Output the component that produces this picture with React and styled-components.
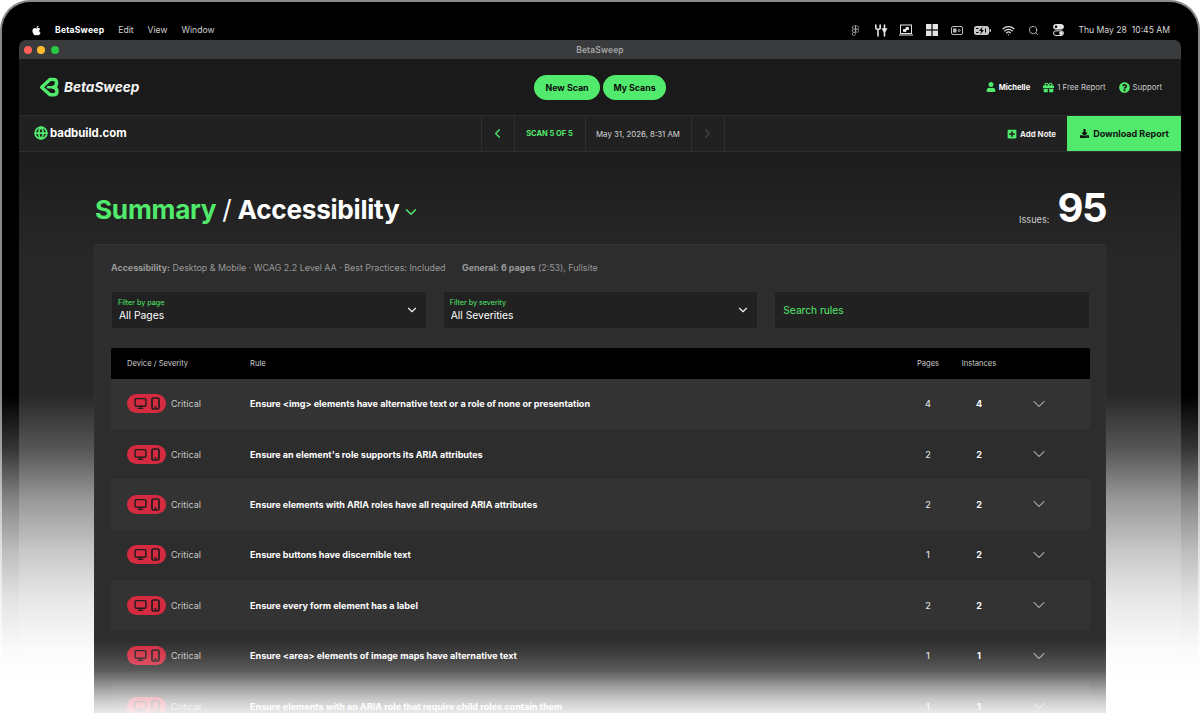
import React from 'react'
import styled, { createGlobalStyle } from 'styled-components'
import { FaApple, FaUser, FaGift, FaQuestionCircle, FaPlusSquare, FaDownload } from 'react-icons/fa'
import { ChevronDown, ChevronLeft, ChevronRight, Monitor, Globe, Wifi, Search, Figma } from 'lucide-react'

const GREEN = '#52ea6c'
const FONT = `Inter, "Noto Sans", sans-serif`

const GlobalStyle = createGlobalStyle`
    html, body {
        margin:0;
        padding:0;
        background:#fff;
        font-family:${FONT};
    }
`

const Page = styled.div`
    position:relative;
    width:1200px;
    height:713px;
    overflow:hidden;
    background:#fff;
`

const Laptop = styled.div`
    height:760px;
    box-sizing:border-box;
    background:#000;
    border:2px solid #8a8a8a;
    border-bottom:none;
    border-radius:30px 30px 0 0;
    padding:0 17px;
`

const MenuBar = styled.div`
    height:38px;
    display:flex;
    align-items:center;
    justify-content:space-between;
    padding:18px 11px 0 12px;
    box-sizing:border-box;
    color:#d8d8d8;
    font-size:8.6px;
`

const MenuGroup = styled.div`
    display:flex;
    align-items:center;
`

const MenuItem = styled.span`
    margin-left:${p => p.$gap}px;
    font-weight:${p => (p.$bold ? 700 : 400)};
    letter-spacing:${p => (p.$bold ? '.2px' : '0')};
    color:${p => (p.$bold ? '#fff' : '#d0d0d0')};
`

const StatusIcon = styled.span`
    width:25.4px;
    height:14px;
    display:flex;
    align-items:center;
    justify-content:center;
    color:#e4e4e4;
`

const Clock = styled.span`
    margin-left:7px;
    white-space:pre;
`

const Window = styled.div`
    border-radius:7px 7px 0 0;
    overflow:hidden;
    background:#1a1a1a;
    height:722px;
`

const TitleBar = styled.div`
    position:relative;
    height:19px;
    background:#393b3c;
    display:flex;
    align-items:center;
    justify-content:center;
    color:#a8a8a8;
    font-size:8.4px;
    font-weight:600;
    letter-spacing:.2px;
`

const Lights = styled.div`
    position:absolute;
    left:5px;
    top:6px;
    display:flex;
    gap:5.4px;
`

const Light = styled.span`
    width:8px;
    height:8px;
    border-radius:50%;
    background:${p => p.$color};
`

const Header = styled.div`
    height:56px;
    display:grid;
    grid-template-columns:1fr auto 1fr;
    align-items:center;
    padding:0 19px;
    background:#1a1a1a;
    border-bottom:1px solid #2c2c2c;
`

const Logo = styled.div`
    display:flex;
    align-items:center;
    gap:5px;
    margin-left:1px;
    color:#f4f4f4;
    font-size:13.6px;
    font-weight:700;
    font-style:italic;
`

const Buttons = styled.div`
    display:flex;
    gap:3px;
`

const PillButton = styled.button`
    height:25px;
    width:${p => p.$width}px;
    padding:0;
    border:none;
    border-radius:13px;
    background:${GREEN};
    color:#0b0b0b;
    font-family:${FONT};
    font-size:8.8px;
    font-weight:700;
`

const UserLinks = styled.div`
    display:flex;
    justify-content:flex-end;
    gap:13px;
`

const UserLink = styled.span`
    display:flex;
    align-items:center;
    gap:3px;
    color:${p => (p.$bold ? '#fff' : '#c8c8c8')};
    font-size:${p => (p.$bold ? 7.6 : 7.8)}px;
    font-weight:${p => (p.$bold ? 700 : 400)};
    svg { color:${GREEN}; }
`

const SubBar = styled.div`
    height:35px;
    display:grid;
    grid-template-columns:1fr auto 1fr;
    align-items:stretch;
    background:#212121;
    border-bottom:1px solid #2f2f2f;
`

const Domain = styled.div`
    display:flex;
    align-items:center;
    gap:2px;
    padding:0 0 2px 15px;
    color:#fff;
    font-size:11.4px;
    font-weight:700;
    svg { color:${GREEN}; }
`

const ScanNav = styled.div`
    display:flex;
    margin-left:5px;
    border-left:1px solid #2f2f2f;
`

const ScanCell = styled.div`
    width:${p => p.$width}px;
    display:flex;
    align-items:center;
    justify-content:center;
    border-right:1px solid #2f2f2f;
    color:${p => (p.$green ? GREEN : '#d8d8d8')};
    font-size:${p => (p.$green ? 7.5 : 7.85)}px;
    font-weight:${p => (p.$green ? 700 : 400)};
`

const SubActions = styled.div`
    display:flex;
    justify-content:flex-end;
    align-items:stretch;
`

const NoteButton = styled.span`
    display:flex;
    align-items:center;
    gap:3px;
    margin-right:11px;
    color:#eee;
    font-size:7.9px;
    font-weight:700;
    svg { color:${GREEN}; }
`

const DownloadButton = styled.div`
    width:113px;
    padding-left:1px;
    display:flex;
    align-items:center;
    justify-content:center;
    gap:4px;
    background:${GREEN};
    color:#111;
    font-size:9px;
    font-weight:700;
`

const Content = styled.div`
    padding:31px 75px 0;
    background:linear-gradient(#1c1c1c, #282828 110px, #2a2a2a);
    height:560px;
`

const TitleRow = styled.div`
    height:61px;
    display:flex;
    justify-content:space-between;
    align-items:flex-start;
`

const Title = styled.h1`
    margin:0;
    display:flex;
    align-items:center;
    height:52px;
    color:#fff;
    font-size:26.2px;
    font-weight:700;
    letter-spacing:-.28px;
`

const TitleGreen = styled.span`
    color:${GREEN};
    margin-left:1px;
`

const TitleSlash = styled.span`
    font-weight:400;
    margin:0 6px;
`

const TitleChevron = styled(ChevronDown)`
    margin:6px 0 0 3px;
    color:${GREEN};
`

const IssueCount = styled.div`
    display:flex;
    align-items:flex-start;
    gap:8px;
    color:#ccc;
    font-size:9.2px;
    b {
        color:#fff;
        font-size:40px;
        line-height:50px;
        font-weight:700;
        letter-spacing:-1.5px;
    }
`

const IssueLabel = styled.span`
    margin-top:31px;
    line-height:12px;
`

const Panel = styled.div`
    background:#2d2d2d;
    border:1px solid #333;
    border-radius:3px;
    padding:16px 15px 16px 16px;
`

const Meta = styled.div`
    display:flex;
    gap:16.5px;
    color:#999;
    font-size:8.9px;
    line-height:14px;
    b { font-weight:700; }
`

const Filters = styled.div`
    display:grid;
    grid-template-columns:repeat(3, 1fr);
    gap:16px;
    margin:16px 0 19px;
`

const Field = styled.div`
    height:38px;
    box-sizing:border-box;
    display:flex;
    align-items:center;
    justify-content:space-between;
    padding:0 7px 0 ${p => (p.$search ? 8 : 6)}px;
    background:#212121;
    border:1px solid #2f2f2f;
    border-radius:2px;
    color:${p => (p.$search ? GREEN : '#fff')};
    font-size:10.2px;
    svg { color:#eee; }
`

const FieldLabel = styled.div`
    color:${GREEN};
    font-size:7.2px;
    line-height:10px;
`

const FieldValue = styled.div`
    color:#fff;
    font-size:10.3px;
    line-height:15px;
    margin-left:1px;
`

const Table = styled.div`
    border-radius:2px;
    overflow:hidden;
`

const TableRow = styled.div`
    display:grid;
    grid-template-columns:139px 653px 50px 52px 68px 17px;
    align-items:center;
    height:${p => (p.$head ? 30.5 : 50.4)}px;
    background:${p => (p.$head ? '#000' : p.$odd ? '#333' : 'transparent')};
    color:${p => (p.$head ? '#ccc' : '#fff')};
    font-size:${p => (p.$head ? 7.6 : 9.05)}px;
    font-weight:${p => (p.$head ? 400 : 700)};
`

const DeviceCell = styled.div`
    display:flex;
    align-items:center;
    gap:5px;
    padding-left:16px;
`

const SeverityPill = styled.span`
    width:39px;
    height:19px;
    display:flex;
    align-items:center;
    justify-content:center;
    gap:4px;
    border-radius:10px;
    background:#d42b40;
    color:#1d1d1d;
`

const SeverityText = styled.span`
    color:#c8c8c8;
    font-size:9px;
    font-weight:400;
`

const Count = styled.div`
    text-align:center;
    color:${p => (p.$dim ? '#ddd' : 'inherit')};
    font-weight:${p => (p.$dim ? 500 : 700)};
`

const HeadCount = styled.div`
    text-align:center;
`

const RowChevron = styled.div`
    display:flex;
    justify-content:center;
    color:#9a9a9a;
`

const SideFade = styled.div`
    position:absolute;
    top:395px;
    bottom:0;
    width:94px;
    ${p => (p.$right ? 'right:0;' : 'left:0;')}
    background:linear-gradient(rgba(255,255,255,0), rgba(255,255,255,.21) 17%, rgba(255,255,255,.52) 33%, rgba(255,255,255,.74) 49%, rgba(255,255,255,.89) 64%, rgba(255,255,255,.98) 80%, #fff 90%);
`

const BottomFade = styled.div`
    position:absolute;
    left:94px;
    right:94px;
    bottom:0;
    height:73px;
    background:linear-gradient(rgba(255,255,255,0), rgba(255,255,255,.1) 22%, rgba(255,255,255,.21) 41%, rgba(255,255,255,.4) 55%, rgba(255,255,255,.57) 68%, rgba(255,255,255,.74) 82%, rgba(255,255,255,.9));
`

const rows = [
    ['Ensure <img> elements have alternative text or a role of none or presentation', 4, 4],
    ["Ensure an element's role supports its ARIA attributes", 2, 2],
    ['Ensure elements with ARIA roles have all required ARIA attributes', 2, 2],
    ['Ensure buttons have discernible text', 1, 2],
    ['Ensure every form element has a label', 2, 2],
    ['Ensure <area> elements of image maps have alternative text', 1, 1],
    ['Ensure elements with an ARIA role that require child roles contain them', 1, 1],
]

function LogoMark() {
    return (
        <svg width="20" height="20" viewBox="0 0 20 20" fill="none" stroke={GREEN} strokeWidth="3.4" strokeLinejoin="round" strokeLinecap="round">
            <path d="M11 2.4 L2.6 10.2 L11 17.8 H14.6 Q18 17.8 18 14.4 Q18 10.6 14.2 10.2 Q17.6 9.8 17.6 6 Q17.6 2.4 14.4 2.4 Z" />
            <path d="M9 10.2 H13" strokeWidth="2.4" />
        </svg>
    )
}

function PhoneIcon() {
    return (
        <svg width="9" height="13" viewBox="0 0 9 13" fill="none" stroke="currentColor" strokeWidth="1.7">
            <rect x="1" y="1" width="7" height="11" rx="1.6" />
            <path d="M3.5 10 H5.5" />
        </svg>
    )
}

function ToolsIcon() {
    return (
        <svg width="14" height="13" viewBox="0 0 14 13" fill="none" stroke="currentColor" strokeWidth="1.6" strokeLinecap="round">
            <path d="M4 5.5 V12 M1.8 1 V3.6 Q1.8 5.5 4 5.5 Q6.2 5.5 6.2 3.6 V1" />
            <path d="M10.5 1 V12" />
            <path d="M8.8 5 L10.5 8 L12.2 5 Z" fill="currentColor" />
        </svg>
    )
}

function ScreenIcon() {
    return (
        <svg width="14" height="12" viewBox="0 0 14 12" fill="none" stroke="currentColor" strokeWidth="1">
            <rect x="1.5" y="1" width="11" height="8.5" />
            <path d="M0 11 H14" />
            <path d="M4.5 7.5 H7 V5.5 H9.5 V3.5 H7 V5.5 H4.5 Z" fill="currentColor" />
        </svg>
    )
}

function GridIcon() {
    return (
        <svg width="12" height="12" viewBox="0 0 12 12" fill="currentColor">
            <rect width="5.4" height="5.4" />
            <rect x="6.6" width="5.4" height="5.4" />
            <rect y="6.6" width="5.4" height="5.4" />
            <rect x="6.6" y="6.6" width="5.4" height="5.4" />
        </svg>
    )
}

function CardIcon() {
    return (
        <svg width="12" height="9" viewBox="0 0 12 9" fill="none" stroke="#b8b8b8" strokeWidth="1">
            <rect x=".5" y=".5" width="11" height="8" rx="1.5" />
            <rect x="2.5" y="3" width="2.5" height="3" fill="#b8b8b8" />
            <circle cx="8.2" cy="4.5" r="1" />
        </svg>
    )
}

function BatteryIcon() {
    return (
        <svg width="17" height="9" viewBox="0 0 17 9">
            <rect width="15" height="9" rx="2.5" fill="#c8c8c8" />
            <rect x="15.5" y="3" width="1.5" height="3" rx=".7" fill="#c8c8c8" />
            <path d="M8.5 .8 L5 5 H7.2 L6.4 8.2 L10 4 H7.8 Z" fill="#000" />
            <path d="M2 2.5 H4.5 M2 6.5 H4.5 M11.5 2.5 V6.5" stroke="#000" strokeWidth="1" />
        </svg>
    )
}

function ControlIcon() {
    return (
        <svg width="11" height="12" viewBox="0 0 11 12" fill="none" stroke="currentColor" strokeWidth="1">
            <rect x=".5" y=".5" width="10" height="4.6" rx="2.3" fill="currentColor" />
            <circle cx="3" cy="2.8" r="1.3" fill="#000" stroke="none" />
            <rect x=".5" y="6.9" width="10" height="4.6" rx="2.3" />
            <circle cx="8" cy="9.2" r="1.4" fill="currentColor" />
        </svg>
    )
}

function App() {
    return (
        <Page>
            <GlobalStyle />
            <Laptop>
                <MenuBar>
                    <MenuGroup>
                        <FaApple size={11} color="#fff" />
                        <MenuItem $gap={13} $bold>BetaSweep</MenuItem>
                        <MenuItem $gap={14}>Edit</MenuItem>
                        <MenuItem $gap={14}>View</MenuItem>
                        <MenuItem $gap={14}>Window</MenuItem>
                    </MenuGroup>
                    <MenuGroup>
                        <StatusIcon><Figma size={11} strokeWidth={1.3} color="#bbb" /></StatusIcon>
                        <StatusIcon><ToolsIcon /></StatusIcon>
                        <StatusIcon><ScreenIcon /></StatusIcon>
                        <StatusIcon><GridIcon /></StatusIcon>
                        <StatusIcon><CardIcon /></StatusIcon>
                        <StatusIcon><BatteryIcon /></StatusIcon>
                        <StatusIcon><Wifi size={13} strokeWidth={2.2} /></StatusIcon>
                        <StatusIcon><Search size={11} strokeWidth={1.6} /></StatusIcon>
                        <StatusIcon><ControlIcon /></StatusIcon>
                        <Clock>Thu May 28  10:45 AM</Clock>
                    </MenuGroup>
                </MenuBar>
                <Window>
                    <TitleBar>
                        <Lights>
                            <Light $color="#ff5f57" />
                            <Light $color="#febc2e" />
                            <Light $color="#28c840" />
                        </Lights>
                        BetaSweep
                    </TitleBar>
                    <Header>
                        <Logo><LogoMark />BetaSweep</Logo>
                        <Buttons>
                            <PillButton $width={66}>New Scan</PillButton>
                            <PillButton $width={63}>My Scans</PillButton>
                        </Buttons>
                        <UserLinks>
                            <UserLink $bold><FaUser size={10} />Michelle</UserLink>
                            <UserLink><FaGift size={11} />1 Free Report</UserLink>
                            <UserLink><FaQuestionCircle size={11} />Support</UserLink>
                        </UserLinks>
                    </Header>
                    <SubBar>
                        <Domain><Globe size={14} strokeWidth={3} />badbuild.com</Domain>
                        <ScanNav>
                            <ScanCell $width={32} $green><ChevronLeft size={15} /></ScanCell>
                            <ScanCell $width={70} $green>SCAN 5 OF 5</ScanCell>
                            <ScanCell $width={105}>May 31, 2026, 8:31 AM</ScanCell>
                            <ScanCell $width={32}><ChevronRight size={15} color="#444" /></ScanCell>
                        </ScanNav>
                        <SubActions>
                            <NoteButton><FaPlusSquare size={10} />Add Note</NoteButton>
                            <DownloadButton><FaDownload size={9} />Download Report</DownloadButton>
                        </SubActions>
                    </SubBar>
                    <Content>
                        <TitleRow>
                            <Title>
                                <TitleGreen>Summary</TitleGreen>
                                <TitleSlash>/</TitleSlash>
                                Accessibility
                                <TitleChevron size={18} />
                            </Title>
                            <IssueCount><IssueLabel>Issues:</IssueLabel><b>95</b></IssueCount>
                        </TitleRow>
                        <Panel>
                            <Meta>
                                <span><b>Accessibility:</b> Desktop &amp; Mobile · WCAG 2.2 Level AA · Best Practices: Included</span>
                                <span><b>General: 6 pages</b> (2:53), Fullsite</span>
                            </Meta>
                            <Filters>
                                <Field>
                                    <div>
                                        <FieldLabel>Filter by page</FieldLabel>
                                        <FieldValue>All Pages</FieldValue>
                                    </div>
                                    <ChevronDown size={14} />
                                </Field>
                                <Field>
                                    <div>
                                        <FieldLabel>Filter by severity</FieldLabel>
                                        <FieldValue>All Severities</FieldValue>
                                    </div>
                                    <ChevronDown size={14} />
                                </Field>
                                <Field $search>Search rules</Field>
                            </Filters>
                            <Table>
                                <TableRow $head>
                                    <DeviceCell>Device / Severity</DeviceCell>
                                    <div>Rule</div>
                                    <HeadCount>Pages</HeadCount>
                                    <HeadCount>Instances</HeadCount>
                                </TableRow>
                                {rows.map((row, i) => (
                                    <TableRow key={row[0]} $odd={i % 2 === 0}>
                                        <DeviceCell>
                                            <SeverityPill>
                                                <Monitor size={13} strokeWidth={2.6} />
                                                <PhoneIcon />
                                            </SeverityPill>
                                            <SeverityText>Critical</SeverityText>
                                        </DeviceCell>
                                        <div>{row[0]}</div>
                                        <Count $dim>{row[1]}</Count>
                                        <Count>{row[2]}</Count>
                                        <RowChevron><ChevronDown size={20} strokeWidth={1.3} /></RowChevron>
                                    </TableRow>
                                ))}
                            </Table>
                        </Panel>
                    </Content>
                </Window>
            </Laptop>
            <SideFade />
            <SideFade $right />
            <BottomFade />
        </Page>
    )
}

export default App
